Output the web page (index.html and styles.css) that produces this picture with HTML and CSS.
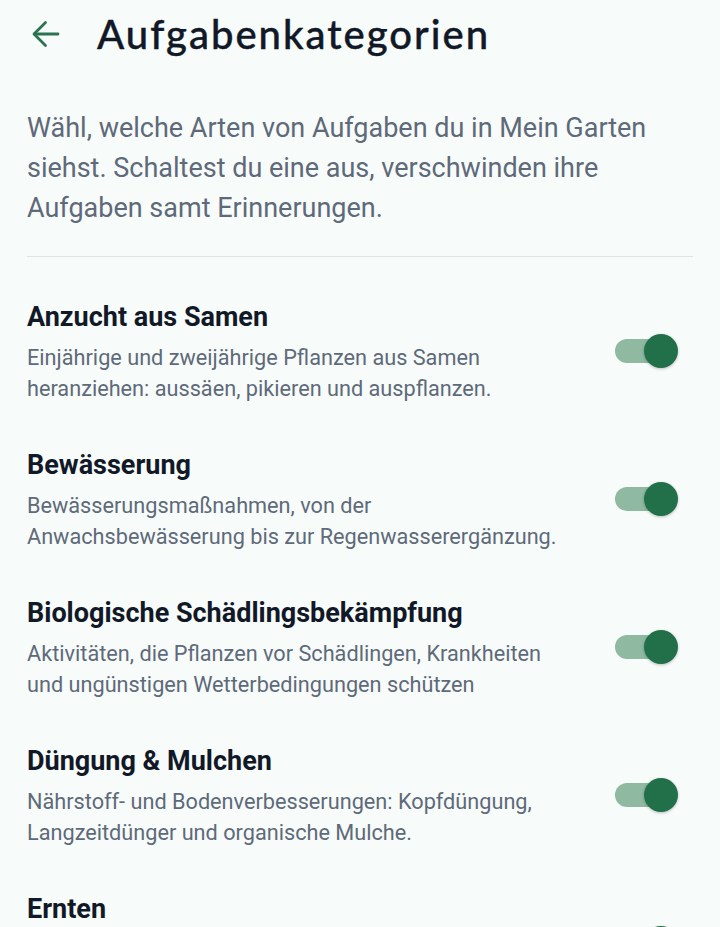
FILE: index.html
```html
<!DOCTYPE html>
<html lang="de">
<head>
<meta charset="utf-8">
<title>Aufgabenkategorien</title>
<link rel="stylesheet" href="styles.css">
</head>
<body>
<div class="page">
  <header class="topbar">
    <button class="back" aria-label="Zurück">
      <svg width="28" height="28" viewBox="0 0 28 28" fill="none" stroke="#2a7250" stroke-width="2.8" stroke-linecap="round" stroke-linejoin="round">
        <path d="M26 14H2.5"/>
        <path d="M13.5 2.5L2 14l11.5 11.5"/>
      </svg>
    </button>
    <h1 class="title">Aufgabenkategorien</h1>
  </header>

  <p class="intro">Wähl, welche Arten von Aufgaben du in Mein Garten siehst. Schaltest du eine aus, verschwinden ihre Aufgaben samt Erinnerungen.</p>

  <hr class="divider">

  <ul class="list">
    <li class="item">
      <div class="text">
        <h2 class="item-title">Anzucht aus Samen</h2>
        <p class="item-desc">Einjährige und zweijährige Pflanzen aus Samen heranziehen: aussäen, pikieren und auspflanzen.</p>
      </div>
      <span class="toggle on"><span class="track"></span><span class="thumb"></span></span>
    </li>
    <li class="item">
      <div class="text">
        <h2 class="item-title">Bewässerung</h2>
        <p class="item-desc">Bewässerungsmaßnahmen, von der Anwachsbewässerung bis zur Regenwasserergänzung.</p>
      </div>
      <span class="toggle on"><span class="track"></span><span class="thumb"></span></span>
    </li>
    <li class="item">
      <div class="text">
        <h2 class="item-title">Biologische Schädlingsbekämpfung</h2>
        <p class="item-desc">Aktivitäten, die Pflanzen vor Schädlingen, Krankheiten und ungünstigen Wetterbedingungen schützen</p>
      </div>
      <span class="toggle on"><span class="track"></span><span class="thumb"></span></span>
    </li>
    <li class="item">
      <div class="text">
        <h2 class="item-title">Düngung &amp; Mulchen</h2>
        <p class="item-desc">Nährstoff- und Bodenverbesserungen: Kopfdüngung, Langzeitdünger und organische Mulche.</p>
      </div>
      <span class="toggle on"><span class="track"></span><span class="thumb"></span></span>
    </li>
    <li class="item">
      <div class="text">
        <h2 class="item-title">Ernten</h2>
        <p class="item-desc">Obst, Gemüse und Kräuter zum richtigen Zeitpunkt ernten, lagern und haltbar machen.</p>
      </div>
      <span class="toggle on"><span class="track"></span><span class="thumb"></span></span>
    </li>
  </ul>
</div>
</body>
</html>
```

FILE: styles.css
```css
html, body {
  margin: 0;
  padding: 0;
  background: #f7fbf9;
}
body {
  font-family: Roboto, "Noto Sans", "DejaVu Sans", sans-serif;
  color: #111827;
  overflow: hidden;
}
.page {
  padding: 0 27px;
}
.topbar {
  display: flex;
  align-items: center;
  height: 68px;
  gap: 32px;
}
.back {
  display: flex;
  align-items: center;
  justify-content: center;
  width: 38px;
  height: 38px;
  padding: 0;
  margin-left: 0;
  border: 0;
  background: transparent;
}
.title {
  margin: 0;
  font-family: Lato, "Open Sans", sans-serif;
  font-weight: 500;
  font-size: 40px;
  letter-spacing: 2px;
  color: #111827;
  -webkit-text-stroke: 0.4px #111827;
}
.intro {
  margin: 40px 0 0;
  font-size: 27px;
  line-height: 40px;
  color: #5e6a7a;
}
.divider {
  margin: 28px 0 0;
  border: 0;
  border-top: 1px solid #dfe4e6;
}
.list {
  list-style: none;
  margin: 0;
  padding: 44px 0 0;
  display: flex;
  flex-direction: column;
  gap: 45px;
}
.item {
  display: flex;
  align-items: center;
  gap: 40px;
}
.text {
  flex: 1;
  min-width: 0;
}
.item-title {
  margin: 0;
  font-size: 27px;
  line-height: 32px;
  font-weight: 700;
  color: #111827;
}
.item-desc {
  margin: 9px 0 0;
  font-size: 21.7px;
  line-height: 31px;
  color: #5e6a7a;
}
.toggle {
  position: relative;
  flex: none;
  width: 64px;
  height: 36px;
  margin: 0 15px 4px 0;
}
.track {
  position: absolute;
  left: 1px;
  top: 6px;
  width: 56px;
  height: 24px;
  border-radius: 12px;
  background: #8fb9a1;
}
.thumb {
  position: absolute;
  right: 0;
  top: 1px;
  width: 34px;
  height: 34px;
  border-radius: 50%;
  background: #22704a;
  box-shadow: 0 1px 3px rgba(0, 0, 0, 0.25);
}
```
